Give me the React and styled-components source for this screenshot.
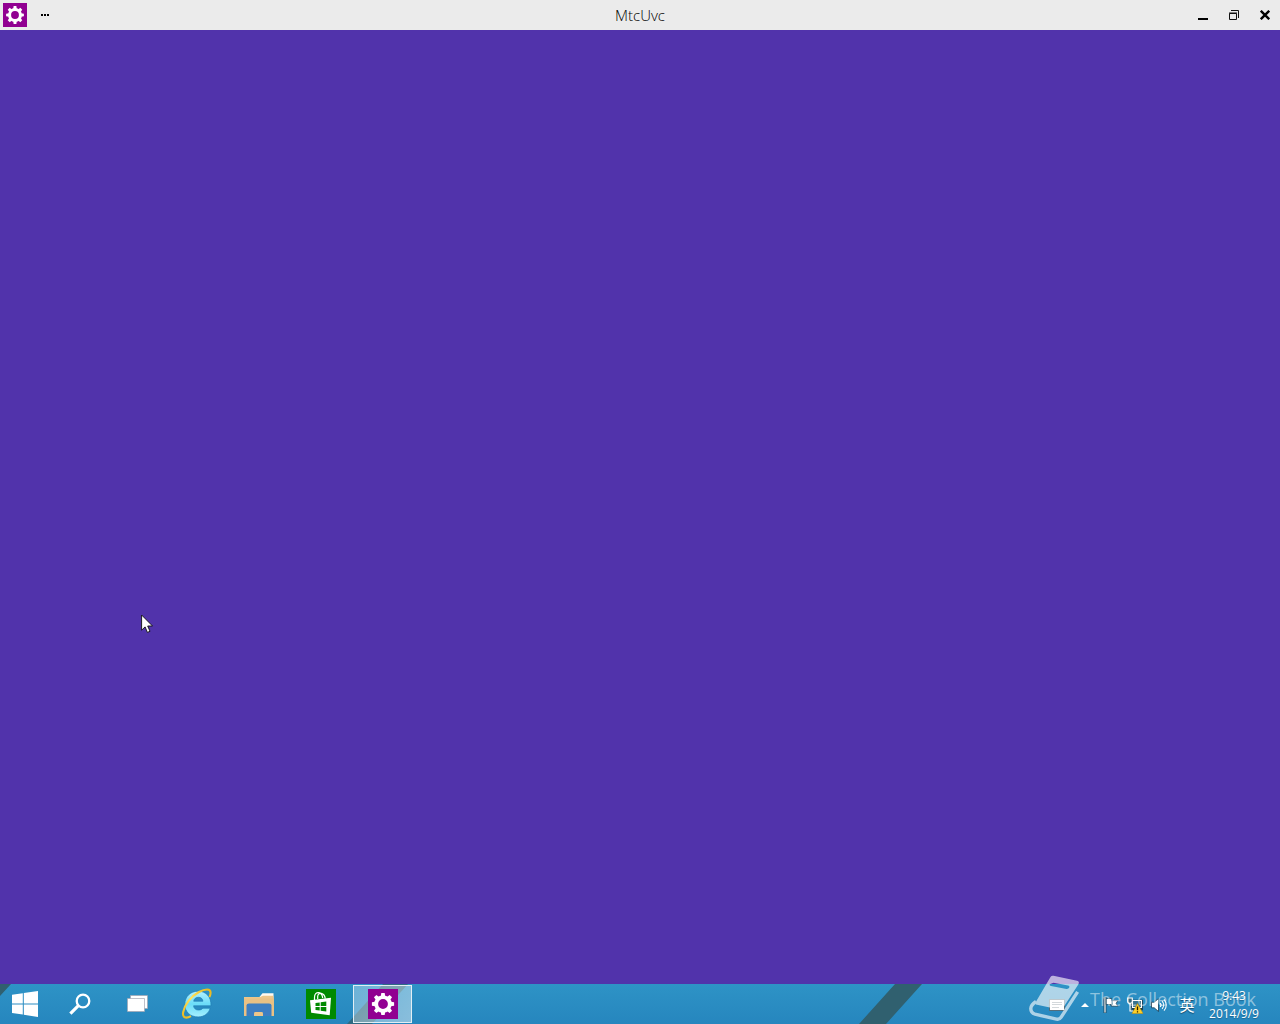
import React from 'react'
import styled, { createGlobalStyle } from 'styled-components'

const GlobalStyle = createGlobalStyle`
  * {
    box-sizing: border-box;
  }
  body {
    margin: 0;
    font-family: 'Open Sans', 'Noto Sans', 'Noto Sans CJK SC', sans-serif;
  }
  button {
    border: 0;
    padding: 0;
    background: none;
    color: inherit;
    font: inherit;
  }
  svg {
    display: block;
    flex: none;
  }
`

const Desktop = styled.div`
  position: relative;
  display: flex;
  flex-direction: column;
  min-height: 100vh;
  overflow: hidden;
`

const TitleBar = styled.header`
  display: grid;
  grid-template-columns: 1fr auto 1fr;
  align-items: center;
  height: 30px;
  background: #ebebeb;
  color: #000;
`

const TitleGroup = styled.div`
  display: flex;
  align-items: center;
  justify-content: ${(p) => (p.$end ? 'flex-end' : 'flex-start')};
  padding-left: ${(p) => (p.$end ? 0 : 3)}px;
`

const Title = styled.h1`
  margin: 0;
  font-size: 15px;
  line-height: 30px;
  font-weight: 300;
`

const CaptionButton = styled.button`
  display: flex;
  align-items: center;
  justify-content: center;
  width: ${(p) => p.$width || 31}px;
  height: 30px;
`

const Splash = styled.main`
  flex: 1;
  background: #5133ab;
`

const Pointer = styled.svg`
  position: absolute;
  left: 141px;
  top: 614px;
`

const TaskBar = styled.footer`
  position: relative;
  display: flex;
  justify-content: space-between;
  height: 40px;
  background: linear-gradient(#2e93c6, #2686be);
  color: #fff;
`

const Stripes = styled.svg`
  position: absolute;
  left: 0;
  top: 0;
`

const Apps = styled.nav`
  position: relative;
  display: flex;
  align-items: center;
  gap: 2px;
`

const TaskButton = styled.button`
  display: flex;
  align-items: center;
  justify-content: center;
  width: ${(p) => p.$width || 60}px;
  height: 38px;
  ${(p) =>
    p.$active &&
    `
    border: 1px solid #e2eef4;
    background: linear-gradient(135deg, rgba(255, 255, 255, 0.3), rgba(255, 255, 255, 0.46));
  `}
`

const Tray = styled.div`
  position: relative;
  display: flex;
  align-items: center;
  padding-right: 15px;
`

const TrayButton = styled.button`
  display: flex;
  align-items: center;
  justify-content: center;
  width: ${(p) => p.$width || 24}px;
  height: 40px;
  padding-top: 2px;
  font-size: 15px;
  line-height: 20px;
  text-shadow: 0 1px 1px #134a6b;
`

const Clock = styled.time`
  width: 62px;
  padding-top: 2px;
  font-size: 12px;
  line-height: 18px;
  text-align: center;
  white-space: nowrap;
  text-shadow: 0 1px 1px #1d6590;
`

const Watermark = styled.div`
  position: absolute;
  right: 24px;
  bottom: 2px;
  display: flex;
  align-items: center;
  gap: 10px;
  color: rgba(255, 255, 255, 0.48);
  font-size: 18px;
  line-height: 24px;
  white-space: nowrap;
  pointer-events: none;
`

const Gear = ({ size }) => (
  <svg width={size} height={size} viewBox="0 0 30 30">
    <rect width="30" height="30" fill="#910091" />
    <circle cx="15" cy="15" r="6.8" fill="none" stroke="#fff" strokeWidth="3.8" />
    {[0, 45, 90, 135, 180, 225, 270, 315].map((angle) => (
      <path
        key={angle}
        d="M12.8 7.4 13.3 3.9h3.4l.5 3.5z"
        fill="#fff"
        transform={`rotate(${angle} 15 15)`}
      />
    ))}
  </svg>
)

const StartIcon = () => (
  <svg width="26" height="26" viewBox="0 0 26 26" fill="#fff">
    <path d="M0 3.8 10.8 2.2V12.4H0zM11.8 2 26 0V12.4H11.8zM0 13.4H10.8V23.6L0 22.1zM11.8 13.4H26V26L11.8 23.8z" />
  </svg>
)

const SearchIcon = () => (
  <svg width="22" height="22" viewBox="0 0 22 22" fill="none" stroke="#fff">
    <circle cx="14" cy="8" r="6.3" strokeWidth="2.3" />
    <path d="M9.6 12.4 1.4 20.6" strokeWidth="3.2" />
  </svg>
)

const TaskViewIcon = () => (
  <svg width="22" height="18" viewBox="0 0 22 18" fill="#fff" stroke="#a5a5b0" strokeWidth=".7">
    <path d="M3.5 .5h17v13h-17z" />
    <path d="M.5 3.5h17v13H.5z" />
  </svg>
)

const ExplorerLogo = () => (
  <svg width="32" height="32" viewBox="0 0 32 32" fill="none">
    <defs>
      <linearGradient id="ie" x1="0" y1="0" x2="0" y2="1">
        <stop offset="0" stopColor="#b4f2ff" />
        <stop offset=".5" stopColor="#6adcf8" />
        <stop offset="1" stopColor="#a5f0ff" />
      </linearGradient>
      <linearGradient id="orbit" x1="0" y1="1" x2="1" y2="0">
        <stop offset="0" stopColor="#eab81f" />
        <stop offset=".5" stopColor="#ffe25c" />
        <stop offset="1" stopColor="#e9b51b" />
      </linearGradient>
    </defs>
    <path
      d="M30 18.8H12.6c.2 2.6 2.1 4.2 4.8 4.2 2.2 0 3.6-.6 4.4-1.8h7.4c-1.6 5.4-6 8.7-12 8.7C9.2 29.9 3.8 25 3.8 17.3 3.8 9.7 9.2 4.2 17.1 4.2c8.2 0 13.2 5.8 12.9 14.6zM12.7 14.2h9.2c-.2-2.4-1.9-3.9-4.5-3.9s-4.3 1.5-4.7 3.9z"
      fill="url(#ie)"
      stroke="#1f7db5"
      strokeWidth=".7"
      transform="translate(0 -1)"
    />
    <path
      d="M10 28.2C4.8 31 1 29.8 2.2 24 3.5 17 10 8.2 18 4 24 .8 29.6.4 29.6 4.4c0 1.8-.5 3.2-1.2 4.6"
      stroke="url(#orbit)"
      strokeWidth="2.1"
    />
  </svg>
)

const FolderIcon = () => (
  <svg width="30" height="24" viewBox="0 0 30 24">
    <path d="M15 5.5 18.5 1.2H29.5V7H15z" fill="#fffaf0" />
    <path d="M0 5h16l3-1.2h10.5V8H0z" fill="#ecc68a" />
    <path d="M0 6.5h30V24H0z" fill="#e9c184" />
    <path d="M2.5 24V13.5Q2.5 11.5 5 11.5H25Q27.5 11.5 27.5 13.5V24z" fill="#3d7fc3" />
    <path d="M10 24v-2.6q0-1.4 1.4-1.4h6.2q1.4 0 1.4 1.4V24z" fill="#ecc68a" />
  </svg>
)

const StoreIcon = () => (
  <svg width="30" height="30" viewBox="0 0 30 30">
    <rect width="30" height="30" fill="#008a00" />
    <path
      d="M8.5 11V8.5C8.5 5 10.5 3.6 12.3 3.6c2.4 0 4 2 4.4 5.4M11.7 10V7.4C12 4.8 13.6 4 15.3 4.4c2.3.5 3.6 2.5 4 5.2"
      fill="none"
      stroke="#fff"
      strokeWidth="1.2"
    />
    <path d="M4 11.2 25 8.7 23.7 26.2 5.2 23.8z" fill="#fff" />
    <path
      d="M9.5 13.9 13.7 13.4v3.6H9.5zM14.7 13.2l5.6-.7V17h-5.6zM9.5 18h4.2v3.6l-4.2-.5zM14.7 18h5.6v4.6l-5.6-.8z"
      fill="#008a00"
    />
  </svg>
)

const KeyboardIcon = () => (
  <svg width="16" height="12" viewBox="0 0 16 12">
    <rect x=".5" y=".5" width="15" height="11" fill="#fff" stroke="#536e7c" />
    <path d="M3 3.5h10M3 5.5h10M3 8.5h7" stroke="#8d9aa1" />
  </svg>
)

const FlagIcon = () => (
  <svg width="16" height="16" viewBox="0 0 16 16" stroke="#123c54" strokeWidth=".8">
    <path d="M1 0h2v16H1z" fill="#fff" />
    <path d="M3.2 1.4h5.6v2.2h6l-1.6 2.8 1.6 2.8H8.2V7.6h-5z" fill="#fff" />
    <path d="M9.2 4v3.6" stroke="#123c54" />
  </svg>
)

const NetworkIcon = () => (
  <svg width="16" height="17" viewBox="0 0 16 17">
    <path d="M5 4h10v8H5zM8 14h5" fill="none" stroke="#173f55" strokeWidth="2.4" />
    <path d="M5.5 3.5h9v7h-9zM10 11v3M6 14.5h7" fill="#38738d" stroke="#fff" strokeWidth="1.1" />
    <path d="M.7 1h4.6v3.6c0 1-.8 1.8-2.3 1.8S.7 5.6.7 4.6zM3 6.5V14h3" fill="#35697f" stroke="#fff" strokeWidth="1.1" />
    <path d="M10.5 6.5 16 16.5H5z" fill="#ffd028" stroke="#c58c00" strokeWidth=".5" />
    <path d="M10.5 9.5v3.8M10.5 14.2v1.3" stroke="#241b00" strokeWidth="1.3" />
  </svg>
)

const SpeakerIcon = () => (
  <svg width="16" height="16" viewBox="0 0 16 16" fill="none">
    <path d="M.5 5.2h2.7L7.5 1.5v13L3.2 10.8H.5z" fill="#fff" stroke="#123c54" strokeWidth=".8" />
    <path
      d="M9.2 6c1 1.2 1 2.8 0 4M11.1 4.2c2 2.2 2 5.4 0 7.6M13 2.3c3 3.3 3 8.1 0 11.4"
      stroke="#fff"
      strokeWidth="1.1"
    />
  </svg>
)

const BookIcon = () => (
  <svg width="51" height="47" viewBox="0 0 51 47">
    <g opacity=".62">
      <path
        d="M21.5 2Q22.5 .4 24.5 .8L48 5.8Q51 6.6 49.3 9.4L34 33Q32.6 35 30.2 34.5L8 29.8Q5.5 29.4 6.8 27zM24.5 7.8 20.6 9.2Q20.4 10.6 22 11L37.5 14Q39.6 14.2 40.4 12.2 40.8 10.8 39 10.5z"
        fill="#fff"
        fillRule="evenodd"
      />
      <path
        d="M7 26.5Q1.8 30 1.8 33.6 1.8 38 6 39.2L27.5 44.2Q30.4 44.8 32 42.4L48.6 16.8"
        fill="none"
        stroke="#fff"
        strokeWidth="3.4"
      />
    </g>
  </svg>
)

export default function App() {
  return (
    <Desktop>
      <GlobalStyle />
      <TitleBar>
        <TitleGroup>
          <Gear size={24} />
          <CaptionButton $width={36} aria-label="App commands">
            <svg width="8" height="2">
              <path d="M0 0h2v2H0zM3 0h2v2H3zM6 0h2v2H6z" />
            </svg>
          </CaptionButton>
        </TitleGroup>
        <Title>MtcUvc</Title>
        <TitleGroup $end>
          <CaptionButton aria-label="Minimize">
            <svg width="10" height="10">
              <path d="M0 8h10v2H0z" />
            </svg>
          </CaptionButton>
          <CaptionButton aria-label="Restore">
            <svg width="10" height="10" fill="none" stroke="#111">
              <path d="M.5 3.5h7v6h-7zM0 3h8M2 .5h7.5V8" />
            </svg>
          </CaptionButton>
          <CaptionButton aria-label="Close">
            <svg width="10" height="10" stroke="#000" strokeWidth="2.4">
              <path d="M.8.8 9.2 9.2M9.2.8.8 9.2" />
            </svg>
          </CaptionButton>
        </TitleGroup>
      </TitleBar>

      <Splash />

      <TaskBar>
        {/* wallpaper showing through the bar */}
        <Stripes width="930" height="40" fill="#30606f">
          <path d="M0 0h11L0 12zM895 0h27L886 40H859z" />
          <path d="M383 0h25L372 40H347z" opacity=".75" />
        </Stripes>
        <Apps>
          <TaskButton $width={50} aria-label="Start">
            <StartIcon />
          </TaskButton>
          <TaskButton $width={56} aria-label="Search">
            <SearchIcon />
          </TaskButton>
          <TaskButton $width={55} aria-label="Task view">
            <TaskViewIcon />
          </TaskButton>
          <TaskButton aria-label="Internet Explorer">
            <ExplorerLogo />
          </TaskButton>
          <TaskButton aria-label="File Explorer">
            <FolderIcon />
          </TaskButton>
          <TaskButton aria-label="Store">
            <StoreIcon />
          </TaskButton>
          <TaskButton $active $width={59} aria-label="MtcUvc">
            <Gear size={30} />
          </TaskButton>
        </Apps>
        <Tray>
          <TrayButton $width={28} aria-label="Touch keyboard">
            <KeyboardIcon />
          </TrayButton>
          <TrayButton $width={28} aria-label="Show hidden icons">
            <svg width="8" height="4" fill="#fff">
              <path d="M0 4 4 0l4 4z" />
            </svg>
          </TrayButton>
          <TrayButton aria-label="Action center">
            <FlagIcon />
          </TrayButton>
          <TrayButton aria-label="Network">
            <NetworkIcon />
          </TrayButton>
          <TrayButton aria-label="Volume">
            <SpeakerIcon />
          </TrayButton>
          <TrayButton $width={32}>英</TrayButton>
          <Clock>
            9:43
            <br />
            2014/9/9
          </Clock>
        </Tray>
      </TaskBar>

      <Watermark>
        <BookIcon />
        <span>The Collection Book</span>
      </Watermark>

      <Pointer width="13" height="20" viewBox="0 0 13 20">
        <path
          d="M.6 1v15.2l3.5-3.3 2.3 5.5 2.6-1.1-2.3-5.3h4.8z"
          fill="#fff"
          stroke="#111"
          strokeWidth=".9"
        />
      </Pointer>
    </Desktop>
  )
}
